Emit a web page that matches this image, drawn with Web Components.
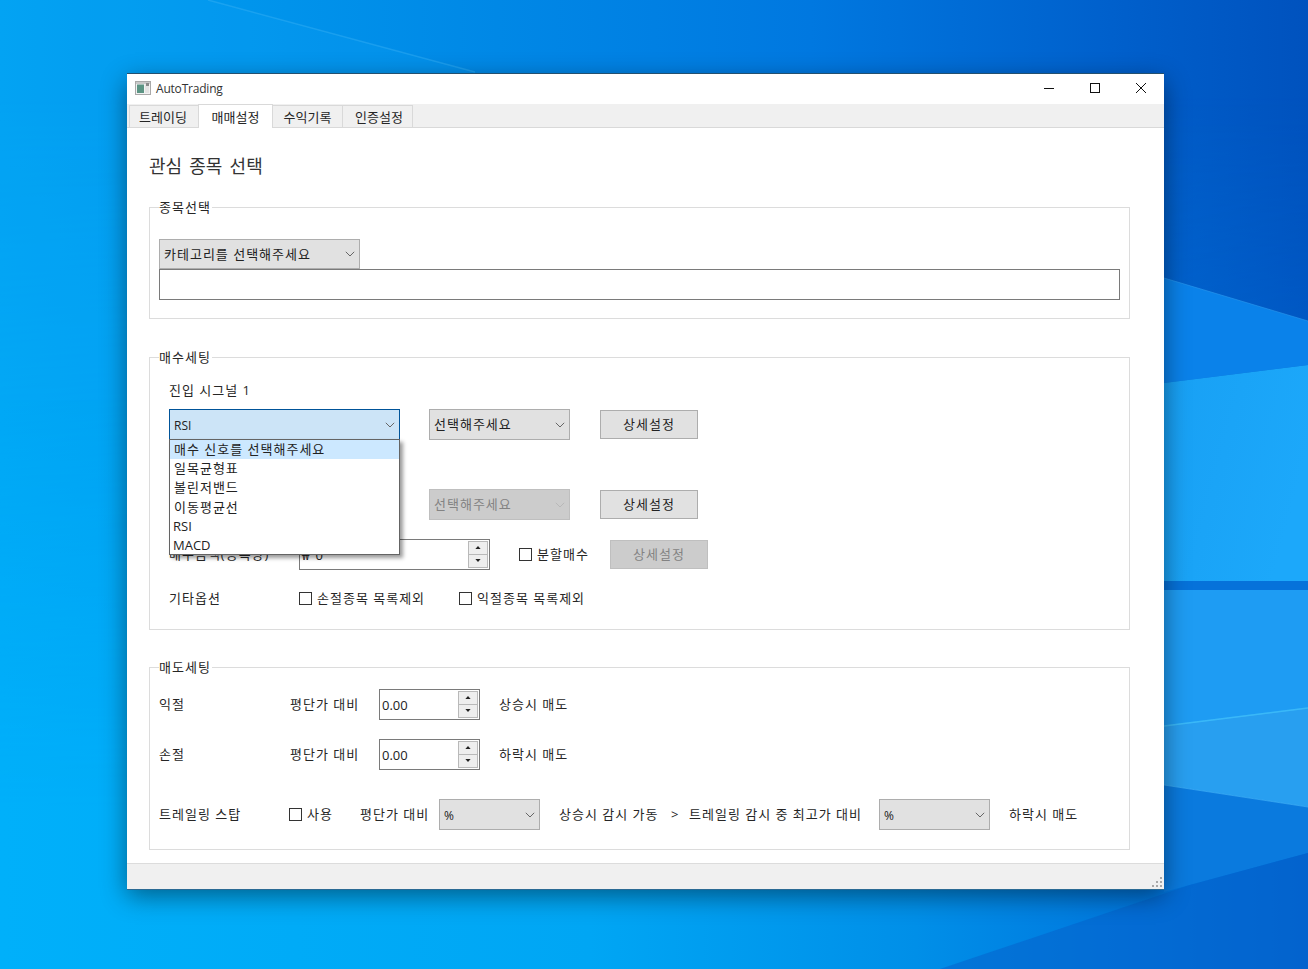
<!DOCTYPE html>
<html lang="ko">
<head>
<meta charset="utf-8">
<title>AutoTrading</title>
<style>
  html, body { margin: 0; padding: 0; height: 100%; overflow: hidden; }
  body { font-family: "Open Sans", "Noto Sans CJK KR", sans-serif; font-size: 14px; color: #262626; }
</style>
</head>
<body>
<desk-top>
  <app-window title="AutoTrading">
    <settings-panel></settings-panel>
  </app-window>
</desk-top>

<script>
class DeskTop extends HTMLElement {
  constructor() {
    super();
    this.attachShadow({ mode: 'open' });
  }

  connectedCallback() {
    this.shadowRoot.innerHTML = `
      <style>
        :host {
          display: block;
          position: relative;
          width: 1308px;
          height: 969px;
          overflow: hidden;
        }
        svg { position: absolute; inset: 0; width: 100%; height: 100%; }
        ::slotted(app-window) { position: absolute; left: 127px; top: 74px; }
      </style>
      <svg viewBox="0 0 1308 969" preserveAspectRatio="none" aria-hidden="true">
        <defs>
          <linearGradient id="base" x1="0" y1="0" x2="1" y2="0">
            <stop offset="0" stop-color="#00a2f2"/>
            <stop offset="0.38" stop-color="#0088e6"/>
            <stop offset="0.62" stop-color="#0078e0"/>
            <stop offset="0.85" stop-color="#0060cc"/>
            <stop offset="1" stop-color="#0052be"/>
          </linearGradient>
          <linearGradient id="low" x1="0" y1="0" x2="1" y2="0">
            <stop offset="0" stop-color="#00b0fa"/>
            <stop offset="0.45" stop-color="#00a6f4"/>
            <stop offset="0.7" stop-color="#008fe8"/>
            <stop offset="0.86" stop-color="#0078de"/>
            <stop offset="1" stop-color="#0064cf"/>
          </linearGradient>
          <linearGradient id="fade" x1="0" y1="0" x2="0" y2="1">
            <stop offset="0.1" stop-color="#000"/>
            <stop offset="0.85" stop-color="#fff"/>
          </linearGradient>
          <mask id="lowmask"><rect width="1308" height="969" fill="url(#fade)"/></mask>
          <linearGradient id="pane" x1="0" y1="0" x2="1" y2="0.4">
            <stop offset="0" stop-color="#18a0f4"/>
            <stop offset="1" stop-color="#1ca8fa"/>
          </linearGradient>
        </defs>
        <rect width="1308" height="969" fill="url(#base)"/>
        <rect width="1308" height="969" fill="url(#low)" mask="url(#lowmask)"/>
        <polygon points="0,0 208,0 475,72 475,400 0,400" fill="#12a8f6" opacity="0.16"/>
        <polygon points="1164,278 1308,321 1308,365 1164,383" fill="#0a82ea"/>
        <polygon points="1164,383 1308,365 1308,581 1164,581" fill="url(#pane)"/>
        <rect x="1164" y="581" width="144" height="9" fill="#0672da"/>
        <polygon points="1164,590 1308,590 1308,708 1164,726" fill="#1e9cf3"/>
        <polygon points="1164,726 1308,708 1308,807 1164,785" fill="#289ff0"/>
        <polygon points="1164,785 1308,807 1308,853 1164,892" fill="#0a7ade"/>
        <polygon points="1190,885 1308,853 1308,969 940,969" fill="#0562cc" opacity="0.55"/>
        <polyline points="208,0 475,72" fill="none" stroke="#3fb4f5" stroke-width="1.5" opacity="0.4"/>
        <polyline points="1164,726 1308,708" fill="none" stroke="#42c2fb" stroke-width="1.5" opacity="0.8"/>
        <polyline points="1164,785 1308,807" fill="none" stroke="#42b0f6" stroke-width="1" opacity="0.7"/>
        <polyline points="1164,278 1308,321" fill="none" stroke="#2d9bef" stroke-width="1" opacity="0.6"/>
      </svg>
      <slot></slot>
    `;
  }
}

class AppWindow extends HTMLElement {
  constructor() {
    super();
    this.attachShadow({ mode: 'open' });
  }

  connectedCallback() {
    const title = this.getAttribute('title');
    this.shadowRoot.innerHTML = `
      <style>
        :host {
          display: flex;
          flex-direction: column;
          width: 1037px;
          height: 815px;
          background: #fff;
          box-shadow: 0 -1px 0 #24506f, 0 1px 0 #2a6a94, 0 7px 24px rgba(0, 0, 0, 0.45);
        }
        .titlebar {
          display: flex;
          align-items: center;
          box-sizing: border-box;
          height: 30px;
          flex: none;
          padding: 0 0 2px 8px;
        }
        .titlebar svg.icon { width: 16px; height: 14px; margin-right: 5px; }
        .titlebar .name { flex: 1; font-size: 12px; letter-spacing: -0.2px; color: #333; }
        .ctl { width: 46px; height: 28px; display: flex; align-items: center; justify-content: center; }
        .ctl svg { width: 12px; height: 12px; }
        .tabs {
          display: flex;
          align-items: flex-end;
          flex: none;
          height: 23px;
          padding-left: 2px;
          background: #f0f0f0;
          border-bottom: 1px solid #d9d9d9;
        }
        .tab {
          box-sizing: border-box;
          height: 22px;
          border: 1px solid #d9d9d9;
          border-bottom: 0;
          margin-left: -1px;
          display: flex;
          align-items: center;
          justify-content: center;
          font-size: 13px;
          background: #f0f0f0;
        }
        .tab:first-child { margin-left: 0; padding-right: 2px; }
        .tab:last-child { padding-left: 3px; }
        .tab.on {
          background: #fff;
          height: 24px;
          margin-bottom: -1px;
          position: relative;
        }
        .body { flex: 1; min-height: 0; }
        .status {
          flex: none;
          height: 26px;
          box-sizing: border-box;
          background: #f0f0f0;
          border-top: 1px solid #dcdcdc;
          display: flex;
          justify-content: flex-end;
          align-items: flex-end;
        }
        .status svg { width: 11px; height: 11px; margin: 0 1px 1px 0; }
      </style>
      <div class="titlebar">
        <svg class="icon" viewBox="0 0 16 14" aria-hidden="true">
          <rect x="0.5" y="0.5" width="15" height="13" fill="#f2f2f2" stroke="#a9a9a9"/>
          <rect x="1" y="1" width="14" height="2" fill="#c9c9c9"/>
          <rect x="2" y="3.5" width="7" height="8.5" fill="#5c9484"/>
          <rect x="10" y="3.5" width="4" height="8.5" fill="#e3e3e3"/>
          <rect x="11" y="2" width="3" height="3" fill="#8a8a8a"/>
        </svg>
        <span class="name">${title}</span>
        <div class="ctl"><svg viewBox="0 0 12 12"><path d="M1 6.5h10" stroke="#111" fill="none"/></svg></div>
        <div class="ctl"><svg viewBox="0 0 12 12"><rect x="1.5" y="1.5" width="9" height="9" stroke="#111" fill="none"/></svg></div>
        <div class="ctl"><svg viewBox="0 0 12 12"><path d="M1 1l10 10M11 1L1 11" stroke="#111" fill="none"/></svg></div>
      </div>
      <div class="tabs">
        <div class="tab" style="width:70px">트레이딩</div>
        <div class="tab on" style="width:75px">매매설정</div>
        <div class="tab" style="width:71px">수익기록</div>
        <div class="tab" style="width:71px">인증설정</div>
      </div>
      <div class="body"><slot></slot></div>
      <div class="status">
        <svg viewBox="0 0 11 11" aria-hidden="true" fill="#a8a8a8">
          <rect x="8" y="0" width="2" height="2"/>
          <rect x="4" y="4" width="2" height="2"/><rect x="8" y="4" width="2" height="2"/>
          <rect x="0" y="8" width="2" height="2"/><rect x="4" y="8" width="2" height="2"/><rect x="8" y="8" width="2" height="2"/>
        </svg>
      </div>
    `;
  }
}

class GroupBox extends HTMLElement {
  constructor() {
    super();
    this.attachShadow({ mode: 'open' });
  }

  connectedCallback() {
    this.shadowRoot.innerHTML = `
      <style>
        :host {
          display: block;
          box-sizing: border-box;
          border: 1px solid #dcdcdc;
        }
        .caption {
          display: block;
          width: max-content;
          height: 20px;
          line-height: 20px;
          margin: -11px 0 0 9px;
          padding: 0 1px 0 0;
          background: #fff;
          font-size: 13px;
        }
      </style>
      <span class="caption">${this.getAttribute('caption')}</span>
      <slot></slot>
    `;
  }
}

class ComboBox extends HTMLElement {
  constructor() {
    super();
    this.attachShadow({ mode: 'open' });
  }

  connectedCallback() {
    const latin = /^[%A-Za-z]/.test(this.getAttribute('value'));
    this.shadowRoot.innerHTML = `
      <style>
        :host {
          display: block;
          position: relative;
          box-sizing: border-box;
          height: 31px;
          flex: none;
          background: #e1e1e1;
          border: 1px solid #adadad;
          --fg: #222;
        }
        :host([state=active]) { background: #cce4f7; border-color: #005499; }
        :host([state=disabled]) { background: #cccccc; border-color: #bfbfbf; --fg: #838383; }
        .face {
          display: flex;
          align-items: center;
          justify-content: space-between;
          height: 100%;
          padding: 0 4px;
          color: var(--fg);
        }
        .face .txt { padding-bottom: 2px; }
        .face .txt.latin { font-size: 12px; letter-spacing: 0; padding: 2px 0 0; }
        .face svg { width: 10px; height: 6px; flex: none; }
        .popup {
          position: absolute;
          left: -1px;
          right: -1px;
          top: 29px;
          box-sizing: border-box;
          height: 116px;
          background: #fff;
          border: 1px solid #646464;
          box-shadow: 3px 3px 4px rgba(0, 0, 0, 0.4);
          z-index: 5;
        }
        :host(:not([open])) .popup { display: none; }
        ::slotted(span) {
          display: block;
          height: 19.2px;
          line-height: 19px;
          padding-left: 4px;
          color: #222;
        }
        ::slotted(span.hl) { background: #cce8ff; }
        ::slotted(span.en) { letter-spacing: 0; padding-left: 3px; }
      </style>
      <div class="face">
        <span class="txt ${latin ? 'latin' : ''}">${this.getAttribute('value')}</span>
        <svg viewBox="0 0 10 6" aria-hidden="true"><path d="M0.8 0.8L5 5l4.2-4.2" fill="none" stroke="${this.getAttribute('state') === 'disabled' ? '#b8b8b8' : '#666'}" stroke-width="1"/></svg>
      </div>
      <div class="popup"><slot></slot></div>
    `;
  }
}

class SpinBox extends HTMLElement {
  constructor() {
    super();
    this.attachShadow({ mode: 'open' });
  }

  connectedCallback() {
    this.shadowRoot.innerHTML = `
      <style>
        :host {
          display: flex;
          box-sizing: border-box;
          height: 31px;
          flex: none;
          align-items: center;
          background: #fff;
          border: 1px solid #7a7a7a;
        }
        .val { flex: 1; padding-left: 2px; font-size: 13px; letter-spacing: 0; word-spacing: 3px; color: #222; }
        .btns {
          display: grid;
          grid-template-rows: 1fr 1fr;
          width: 20px;
          height: 27px;
          margin-right: 1px;
          box-sizing: border-box;
          border: 1px solid #b9b9b9;
          background: #eeeeee;
        }
        .btns div { display: flex; align-items: center; justify-content: center; }
        .btns div:first-child { border-bottom: 1px solid #b9b9b9; }
        .btns svg { width: 6px; height: 3px; }
      </style>
      <span class="val">${this.getAttribute('value')}</span>
      <div class="btns">
        <div><svg viewBox="0 0 7 4"><path d="M3.5 0L7 4H0z" fill="#222"/></svg></div>
        <div><svg viewBox="0 0 7 4"><path d="M3.5 4L7 0H0z" fill="#222"/></svg></div>
      </div>
    `;
  }
}

class CheckBox extends HTMLElement {
  constructor() {
    super();
    this.attachShadow({ mode: 'open' });
  }

  connectedCallback() {
    this.shadowRoot.innerHTML = `
      <style>
        :host {
          display: flex;
          align-items: center;
          flex: none;
          font-size: 13px;
        }
        .box {
          box-sizing: border-box;
          width: 13px;
          height: 13px;
          margin-right: 5px;
          border: 1px solid #333;
          background: #fff;
          flex: none;
        }
        .lbl { padding-bottom: 2px; }
      </style>
      <span class="box"></span><span class="lbl"><slot></slot></span>
    `;
  }
}

class PushButton extends HTMLElement {
  constructor() {
    super();
    this.attachShadow({ mode: 'open' });
  }

  connectedCallback() {
    this.shadowRoot.innerHTML = `
      <style>
        :host {
          display: flex;
          align-items: center;
          justify-content: center;
          box-sizing: border-box;
          width: 98px;
          height: 29px;
          flex: none;
          padding-bottom: 2px;
          background: #e1e1e1;
          border: 1px solid #adadad;
          font-size: 13px;
          color: #222;
        }
        :host([disabled]) { background: #cccccc; border-color: #bfbfbf; color: #838383; }
      </style>
      <slot></slot>
    `;
  }
}

class SettingsPanel extends HTMLElement {
  constructor() {
    super();
    this.attachShadow({ mode: 'open' });
  }

  connectedCallback() {
    this.shadowRoot.innerHTML = `
      <style>
        :host {
          display: block;
          padding: 0 34px 0 22px;
          font-size: 13px;
          letter-spacing: 1px;
        }
        h1 {
          margin: 0;
          padding-top: 25px;
          height: 50px;
          box-sizing: border-box;
          line-height: 26px;
          font-size: 18px;
          font-weight: 400;
          letter-spacing: 0;
          word-spacing: 2.5px;
          color: #333;
        }
        .row { display: flex; align-items: center; }
        .row > span { padding-bottom: 2px; }
        .sel { height: 112px; margin-top: 29px; }
        .sel .wrap { padding: 22px 9px 0; }
        .sel combo-box { width: 201px; height: 30px; }
        .sel .field { box-sizing: border-box; height: 31px; border: 1px solid #7a7a7a; background: #fff; }
        .buy { height: 273px; margin-top: 38px; }
        .buy .wrap { padding: 12px 19px 0; }
        .sell { height: 183px; margin-top: 37px; }
        .sell .wrap { padding: 12px 9px 0; }
        .w130 { width: 130px; flex: none; }
      </style>
      <h1>관심 종목 선택</h1>

      <group-box class="sel" caption="종목선택">
        <div class="wrap">
          <combo-box value="카테고리를 선택해주세요"></combo-box>
          <div class="field"></div>
        </div>
      </group-box>

      <group-box class="buy" caption="매수세팅">
        <div class="wrap">
          <div class="row" style="height:20px">진입 시그널 1</div>
          <div class="row" style="height:31px;margin-top:10px">
            <combo-box value="RSI" state="active" open style="width:231px">
              <span class="hl">매수 신호를 선택해주세요</span>
              <span>일목균형표</span>
              <span>볼린저밴드</span>
              <span>이동평균선</span>
              <span class="en">RSI</span>
              <span class="en">MACD</span>
            </combo-box>
            <combo-box value="선택해주세요" style="width:141px;margin-left:29px"></combo-box>
            <push-button style="margin-left:30px">상세설정</push-button>
          </div>
          <div class="row" style="height:31px;margin-top:49px">
            <combo-box value="선택해주세요" state="disabled" style="width:141px;margin-left:260px"></combo-box>
            <push-button style="margin-left:30px">상세설정</push-button>
          </div>
          <div class="row" style="height:31px;margin-top:19px">
            <span class="w130">매수금액(종목당)</span>
            <spin-box value="₩ 0" style="width:191px"></spin-box>
            <check-box style="width:91px;margin-left:29px">분할매수</check-box>
            <push-button disabled>상세설정</push-button>
          </div>
          <div class="row" style="height:20px;margin-top:18px">
            <span class="w130">기타옵션</span>
            <check-box style="width:160px">손절종목 목록제외</check-box>
            <check-box>익절종목 목록제외</check-box>
          </div>
        </div>
      </group-box>

      <group-box class="sell" caption="매도세팅">
        <div class="wrap">
          <div class="row" style="height:31px">
            <span style="width:131px">익절</span>
            <span style="width:89px">평단가 대비</span>
            <spin-box value="0.00" style="width:101px"></spin-box>
            <span style="margin-left:19px">상승시 매도</span>
          </div>
          <div class="row" style="height:31px;margin-top:19px">
            <span style="width:131px">손절</span>
            <span style="width:89px">평단가 대비</span>
            <spin-box value="0.00" style="width:101px"></spin-box>
            <span style="margin-left:19px">하락시 매도</span>
          </div>
          <div class="row" style="height:31px;margin-top:29px">
            <span style="width:130px">트레일링 스탑</span>
            <check-box style="width:71px">사용</check-box>
            <span style="width:79px">평단가 대비</span>
            <combo-box value="%" style="width:101px"></combo-box>
            <span style="width:112px;margin-left:19px">상승시 감시 가동</span>
            <span style="width:18px">&gt;</span>
            <span style="width:190px">트레일링 감시 중 최고가 대비</span>
            <combo-box value="%" style="width:111px"></combo-box>
            <span style="margin-left:19px">하락시 매도</span>
          </div>
        </div>
      </group-box>
    `;
  }
}

customElements.define('desk-top', DeskTop);
customElements.define('app-window', AppWindow);
customElements.define('group-box', GroupBox);
customElements.define('combo-box', ComboBox);
customElements.define('spin-box', SpinBox);
customElements.define('check-box', CheckBox);
customElements.define('push-button', PushButton);
customElements.define('settings-panel', SettingsPanel);
</script>
</body>
</html>
